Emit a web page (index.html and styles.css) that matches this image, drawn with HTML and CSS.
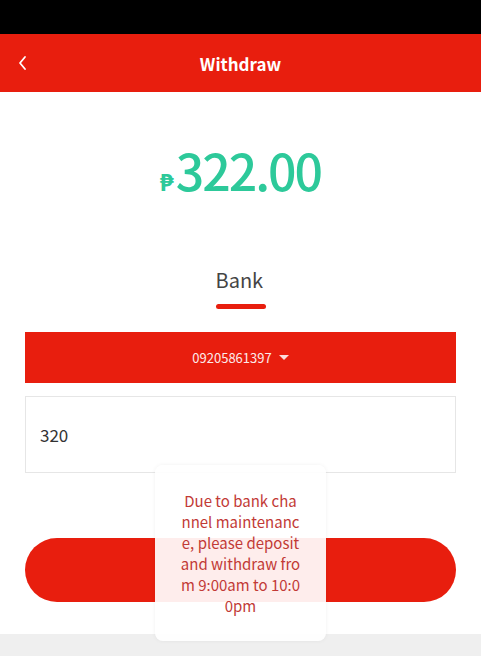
FILE: index.html
```html
<!DOCTYPE html>
<html lang="en">
<head>
    <meta charset="UTF-8">
    <meta name="viewport" content="width=device-width, initial-scale=1.0">
    <title>Withdraw</title>
    <link rel="stylesheet" href="styles.css">
</head>
<body>
    <!-- Barre d'état -->
    <div class="statusbar"></div>

    <!-- En-tête -->
    <div class="header">
        <a class="back" href="#">
            <svg width="10" height="16" viewBox="0 0 10 16">
                <path d="M8 2 L3 8 L8 14" fill="none" stroke="#ffffff" stroke-width="1.8" stroke-linecap="round" stroke-linejoin="round"/>
            </svg>
        </a>
        <div class="title">Withdraw</div>
        <div></div>
    </div>

    <!-- Solde -->
    <div class="balance">
        <span class="currency">₱</span><span class="amount">322.00</span>
    </div>

    <!-- Onglets -->
    <div class="tabs">
        <div class="tab active">Bank</div>
    </div>

    <!-- Formulaire -->
    <div class="form">
        <div class="account">
            <span>09205861397</span>
            <span class="caret"></span>
        </div>
        <div class="field">320</div>
        <button class="submit"></button>
    </div>

    <div class="bottom"></div>

    <!-- Message -->
    <div class="toast">Due to bank channel maintenance, please deposit and withdraw from 9:00am to 10:00pm</div>
</body>
</html>
```

FILE: styles.css
```css
/* Général */
body {
    margin: 0;
    font-family: "Noto Sans CJK SC", "Noto Sans", sans-serif;
    background-color: #FFFFFF;
    color: #333333;
    height: 656px;
    overflow: hidden;
    position: relative;
}

.statusbar {
    height: 34px;
    background-color: #000000;
}

/* En-tête rouge */
.header {
    height: 58px;
    background-color: #E81E0E;
    display: grid;
    grid-template-columns: 60px 1fr 60px;
    align-items: center;
}

.back {
    display: flex;
    align-items: center;
    padding-left: 17px;
}

.title {
    text-align: center;
    color: #FFFFFF;
    font-size: 17px;
    font-weight: bold;
}

/* Solde */
.balance {
    text-align: center;
    color: #2DC99A;
    padding-top: 41px;
    height: 100px;
    line-height: 72px;
}

.currency {
    font-size: 24px;
    font-weight: bold;
    margin-right: 2px;
}

.amount {
    font-size: 50px;
    font-weight: 500;
    letter-spacing: -2px;
}

/* Onglets */
.tabs {
    display: flex;
    justify-content: center;
    padding-top: 29px;
}

.tab {
    font-size: 20px;
    color: #444444;
    line-height: 36px;
    padding-bottom: 14px;
    position: relative;
}

.tab.active::after {
    content: "";
    display: block;
    width: 50px;
    height: 5px;
    border-radius: 3px;
    background-color: #E81E0E;
    margin: 6px auto 0;
}

/* Formulaire */
.form {
    margin: 9px 25px 0;
}

.account {
    height: 51px;
    background-color: #E81E0E;
    color: #FCEAEA;
    font-size: 13px;
    display: flex;
    align-items: center;
    justify-content: center;
    gap: 7px;
}

.caret {
    width: 0;
    height: 0;
    border-left: 5px solid transparent;
    border-right: 5px solid transparent;
    border-top: 5px solid #FFFFFF;
    opacity: 0.85;
}

.field {
    margin-top: 13px;
    height: 77px;
    border: 1px solid #E6E6E6;
    box-sizing: border-box;
    padding-left: 14px;
    display: flex;
    align-items: center;
    font-size: 17px;
    color: #333333;
}

.submit {
    display: block;
    width: 100%;
    height: 64px;
    margin-top: 65px;
    border: none;
    border-radius: 32px;
    background-color: #E81E0E;
}

.bottom {
    margin-top: 32px;
    height: 22px;
    background-color: #EFEFEF;
}

/* Message */
.toast {
    position: absolute;
    left: 155px;
    top: 465px;
    width: 171px;
    height: 176px;
    box-sizing: border-box;
    padding: 25px 25px 0 25px;
    background-color: rgba(255, 255, 255, 0.92);
    border-radius: 8px;
    box-shadow: 0 0 4px rgba(0, 0, 0, 0.06);
    color: #C23A36;
    font-size: 15px;
    line-height: 21px;
    text-align: center;
    word-break: break-all;
}
```
